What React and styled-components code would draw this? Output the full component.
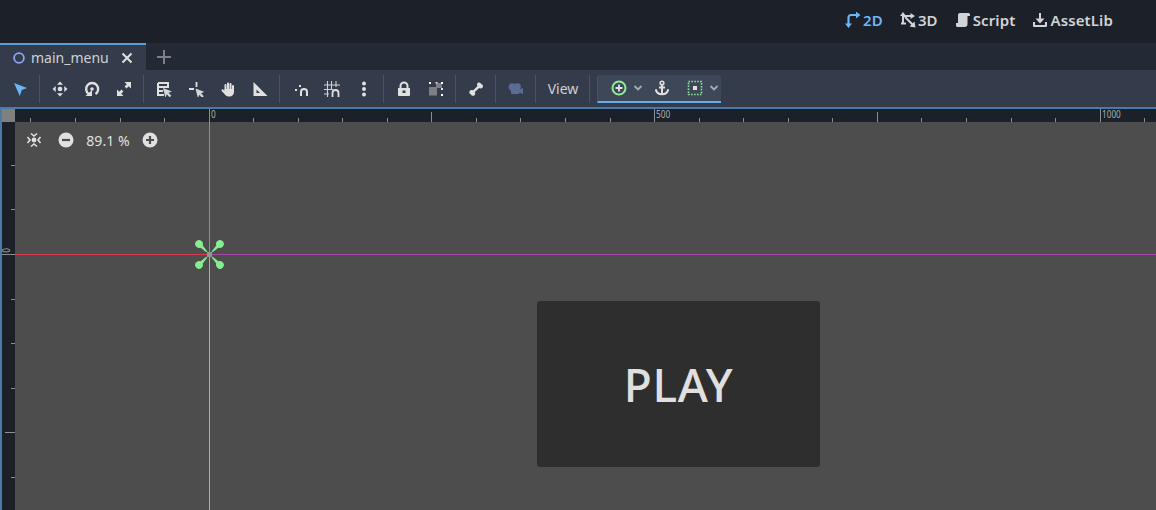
import React from "react";
import styled, { createGlobalStyle } from "styled-components";

const Global = createGlobalStyle`
  html, body { margin: 0; padding: 0; background: #4d4d4d; overflow: hidden; }
  body { font-family: "Noto Sans", "Open Sans", sans-serif; }
`;
const Shell = styled.div`width:1156px;height:510px;display:flex;flex-direction:column;overflow:hidden;`;
const TopBar = styled.header`height:43px;box-sizing:border-box;padding-bottom:3px;background:#1c2129;display:flex;justify-content:flex-end;align-items:center;padding-right:43px;gap:17px;flex:none;`;
const MenuItem = styled.div`display:flex;align-items:center;gap:2px;font-size:15px;font-weight:600;letter-spacing:.12px;color:${p=>p.$on?"#6cb6f5":"#d2d3d6"};line-height:16px;`;
const TabBar = styled.div`height:27px;background:#232935;display:flex;align-items:stretch;flex:none;`;
const Tab = styled.div`width:146px;box-sizing:border-box;border-top:2px solid #5b9fd8;background:#343c4c;display:flex;align-items:center;padding-left:13px;gap:6px;color:#cdd0d5;font-size:14px;`;
const TabName = styled.span`width:84px;`;
const AddTab = styled.div`width:36px;display:flex;align-items:center;justify-content:center;`;
const Toolbar = styled.div`height:37px;background:#343c4c;display:flex;align-items:center;padding-left:4px;flex:none;`;
const ToolBtn = styled.div`width:32px;height:28px;display:flex;align-items:center;justify-content:center;`;
const Sep = styled.div`width:8px;height:28px;flex:none;&::before{content:"";display:block;width:1px;height:100%;margin-left:3px;background:#4a5262;}`;
const ViewBtn = styled.div`width:46px;text-align:center;font-size:14px;color:#cdd0d5;`;
const AnchorPanel = styled.div`margin-left:3px;width:124px;height:28px;box-sizing:border-box;background:#3e4757;border-bottom:2px solid #63ade8;border-left:1px solid #4a5262;border-radius:3px 3px 0 0;display:flex;align-items:center;padding-left:12px;`;
const PanelItem = styled.div`width:${p=>p.$w}px;margin-left:${p=>p.$ml||0}px;display:flex;align-items:center;justify-content:center;flex:none;`;
const Viewport = styled.div`flex:1;position:relative;background:#4d4d4d;border-top:2px solid #4a7ba8;border-left:2px solid #4a7ba8;display:grid;grid-template-columns:13px 1fr;grid-template-rows:13px 1fr;`;
const Corner = styled.div`background:#808080;`;
const RulerTrack = styled.div`position:relative;background:#1c2129;`;
const RulerTicks = styled.svg`display:block;`;
const RulerLabel = styled.span`position:absolute;left:${p=>p.$x}px;top:0;font-size:10px;line-height:11px;color:#a8aaad;transform:scaleX(.82);transform-origin:left top;`;
const RulerLabelV = styled.span`position:absolute;left:2px;top:124px;font-size:10px;line-height:9px;color:#a8aaad;transform:scaleY(.82) rotate(-90deg);`;
const Canvas = styled.div`position:relative;overflow:hidden;background:#4d4d4d;`;
const ZoomBar = styled.div`position:absolute;left:11px;top:9px;display:flex;align-items:center;height:18px;color:#e0e0e0;font-size:14px;`;
const ZoomText = styled.span`width:68px;text-align:center;letter-spacing:.1px;white-space:nowrap;`;
const ZoomReset = styled.div`width:16px;display:flex;margin-right:16px;`;
const GuideVTop = styled.div`position:absolute;left:194px;top:0;height:132px;width:1px;background:#7cae1a;`;
const GuideVBottom = styled.div`position:absolute;left:194px;top:133px;bottom:0;width:1px;background:#a3b0a3;`;
const GuideRed = styled.div`position:absolute;left:0;top:132px;width:194px;height:1px;background:#d83a52;`;
const GuidePurple = styled.div`position:absolute;left:195px;right:0;top:132px;height:1px;background:#a843a8;`;
const Origin = styled.svg`position:absolute;left:178px;top:116px;`;
const PlayButton = styled.div`position:absolute;left:522px;top:179px;width:283px;height:166px;background:#2e2e2e;border-radius:3px;display:flex;align-items:center;justify-content:center;color:#e0e0e0;font-size:46px;font-weight:500;letter-spacing:.6px;line-height:1;`;

const I = ({children,s=16,c="#e0e0e0",f="none",w=1.5}) => (
  <svg width={s} height={s} viewBox="0 0 16 16" fill={f} stroke={c} strokeWidth={w} strokeLinecap="round" strokeLinejoin="round">{children}</svg>
);
const Cursor = ({c="#d4d5d8",x=6,y=6}) => <path d={`M${x} ${y}l9 3.400-3.400 1.400 2.700 3-1.700 1.500-2.800-3-1.300 3.500z`} fill={c} stroke="none"/>;

const tools = {
  select:<I><path d="M2 2l13 5-5.200 2-2 6z" fill="#6cb6f5" stroke="none"/></I>,
  move:<I><g fill="#e0e0e0" stroke="none"><path d="M8 .500l3 3.200H5zM8 15.500l3-3.200H5zM.500 8l3.200-3v6zM15.500 8l-3.200-3v6z"/><circle cx="8" cy="8" r="2.300"/></g></I>,
  rotate:<I w={2.400}><path d="M4.800 13A6 6 0 1 1 11.500 13" strokeLinecap="butt"/><circle cx="8" cy="8" r="1.800" fill="#e0e0e0" stroke="none"/><path d="M1.500 15h6.500V9z" fill="#e0e0e0" stroke="none"/></I>,
  scale:<I><g fill="#e0e0e0" stroke="none"><path d="M8.500 1H15v6.500l-2.300-2.300L10.500 7.400 8.600 5.500 10.800 3.300zM1 15V8.500l2.300 2.300 2.200-2.200 1.900 1.900-2.200 2.200L7.500 15z"/></g></I>,
  list:<I><path d="M2 2h10v4H2M2 2v12h6M2 10h5" strokeWidth={2} strokeLinecap="butt" strokeLinejoin="miter"/><Cursor x={7} y={7}/></I>,
  pivot:<I><path d="M1 8h5M8.500 1v5" strokeWidth={1.800} strokeLinecap="butt"/><Cursor x={7.500} y={7.500}/></I>,
  pan:<I><path d="M5.500 9V4M8 8V2.500M10.500 8V3M13 9V5" strokeWidth={2}/><path d="M4.500 8h9.500v3c0 2.500-2 4.500-4.500 4.500h-1c-2 0-3-1-4-2.500L1.500 9.800C1 9 2.300 7.800 3.200 8.600l1.300 1.200z" fill="#e0e0e0" stroke="none"/></I>,
  ruler:<I><path d="M1.500 1v14H15.500zM4.500 8.500V12h3.500z" fill="#e0e0e0" fillRule="evenodd" stroke="none"/></I>,
  smart:<I><path d="M9 15v-4a3 3 0 0 1 6 0v4" strokeWidth={2} strokeLinecap="butt"/><g fill="#e0e0e0" stroke="none"><rect x="3" y="8" width="2" height="2"/><rect x="7" y="4" width="2" height="2"/></g></I>,
  grid:<I><path d="M0 4h16M0 8.500h9M0 13h5M3.500 0v16M7.500 0v8M12 0v6" strokeWidth={1.100} strokeLinecap="butt" stroke="#d0d1d4"/><path d="M8.500 16v-4a3 3 0 0 1 6 0v4" strokeWidth={1.800} strokeLinecap="butt"/></I>,
  dots:<I><g fill="#e0e0e0" stroke="none"><circle cx="8" cy="2.500" r="2"/><circle cx="8" cy="8" r="2"/><circle cx="8" cy="13.500" r="2"/></g></I>,
  lock:<I><path d="M2 7h12v7a1 1 0 0 1-1 1H3a1 1 0 0 1-1-1z" fill="#e0e0e0" stroke="none"/><path d="M4.500 7V5a3.500 3.500 0 0 1 7 0v2" strokeWidth={2}/><rect x="6.500" y="9.500" width="3" height="2.500" fill="#343c4c" stroke="none"/></I>,
  group:<I><g stroke="none"><path d="M1 6h7V2h6v5H9v7.500H1z" fill="#7c7f86"/><rect x="1" y="1" width="2" height="2" fill="#fff"/><rect x="7.500" y="1" width="2" height="1.500" fill="#e0e0e0"/><rect x="13" y="1" width="2" height="2" fill="#fff"/><rect x="13" y="7" width="2" height="2" fill="#e0e0e0"/><rect x="13" y="13" width="2" height="2" fill="#fff"/></g></I>,
  bone:<I><path d="M11 1.500a2.300 2.300 0 0 1 2.200 1.500 2.300 2.300 0 0 1 1.200 3.800c-.9 1-2.400.8-3.200.2L6.800 11c.6 1 .6 2.400-.3 3.200-1.200 1.200-3.200.6-3.600-1-1.600-.4-2.200-2.300-1-3.500.9-.9 2.300-.9 3.200-.3L9.500 5c-.6-1-.7-2.200.1-3 .4-.4 .9-.5 1.400-.5z" fill="#e0e0e0" stroke="none"/></I>,
  camera:<I><g fill="#5d6c94" stroke="none"><circle cx="4.500" cy="6" r="3.800"/><circle cx="9.500" cy="5.500" r="3.300"/><rect x="3" y="7" width="8.500" height="6" rx="1"/><path d="M11 8.500l4-1.500v6l-4-1.500z"/></g></I>,
};

const AddIcon = () => <I><circle cx="8" cy="8" r="6.500" stroke="#8eef97" strokeWidth={2}/><path d="M8 4.500v7M4.500 8h7" stroke="#e0e0e0" strokeWidth={1.800} strokeLinecap="butt"/></I>;
const Chevron = () => <svg width="10" height="6" viewBox="0 0 10 6"><path d="M1.500 1l3.500 3.500L8.500 1" fill="none" stroke="#a6aab2" strokeWidth="1.800"/></svg>;
const AnchorIcon = () => <I><circle cx="8" cy="3" r="1.800" strokeWidth={1.600}/><path d="M8 4.500V14M5 7.500h6" strokeWidth={2} strokeLinecap="butt"/><path d="M2 10c.500 2.800 3 4.300 6 4.300s5.500-1.500 6-4.300" strokeWidth={2}/></I>;
const RectIcon = () => <I><rect x="1.500" y="1.500" width="13" height="13" stroke="#8eef97" strokeDasharray="1.500 1.400" strokeLinecap="butt" strokeWidth={1.600}/><rect x="6" y="6" width="4" height="4" fill="#e0e0e0" stroke="none"/></I>;

const hTicks = [];
for (let i = -4; i <= 21; i++) {
  hTicks.push({ x: Math.round(193.6 + i * 44.55), len: i % 10 === 0 ? 13 : i % 5 === 0 ? 10 : 4 });
}
const LABELS = [[0,"0"],[10,"500"],[20,"1000"]];
const vTicks = [];
for (let i = -2; i <= 5; i++) {
  vTicks.push({ y: Math.round(132 + i * 44.55), len: i === 0 ? 13 : i === 4 ? 10 : 4 });
}
const Petal = ({r}) => (
  <g transform={`rotate(${r} 16.500 16.500)`} fill="#86ee90">
    <path d="M14.700 3.500L15.900 12.800H17.100L18.300 3.500z" />
    <circle cx="16.500" cy="1.700" r="3.800" />
  </g>
);

export default function App() {
  return (
    <Shell>
      <Global />
      <TopBar>
        <MenuItem $on>
          <I c="#6cb6f5" w={2.200}><path d="M3.500 13V5.500a2.500 2.500 0 0 1 2.500-2.500H12" strokeLinecap="butt"/><path d="M11 -.500l4.500 3.500L11 6.500zM0 11.500L3.500 16l3.500-4.500z" fill="#6cb6f5" stroke="none"/></I>
          2D
        </MenuItem>
        <MenuItem>
          <I c="#d2d3d6" w={2}><path d="M3 12V2M1 11.500h5M3 4h9M5 5l8 8" strokeLinecap="butt"/><path d="M15.500 15.500l-6-1 5-5zM0 4L3 0l3 4zM10.500 1l4.500 3-4.500 3z" fill="#d2d3d6" stroke="none"/></I>
          3D
        </MenuItem>
        <MenuItem>
          <I c="#d2d3d6"><path d="M5 1h8.500a1.500 1.500 0 0 1 1.500 1.500V4h-2.500v8a3 3 0 0 1-3 3H2.500A1.500 1.500 0 0 1 1 13.500V11h2V3a2 2 0 0 1 2-2z" fill="#d2d3d6" stroke="none"/></I>
          Script
        </MenuItem>
        <MenuItem>
          <I c="#d2d3d6" w={2}><path d="M8 1v8" strokeLinecap="butt"/><path d="M3.500 6.500L8 11.500l4.500-5z" fill="#d2d3d6" stroke="none"/><path d="M2 10v4h12v-4" strokeLinecap="butt"/></I>
          AssetLib
        </MenuItem>
      </TopBar>
      <TabBar>
        <Tab>
          <svg width="12" height="12" viewBox="0 0 12 12"><circle cx="6" cy="6" r="4.900" fill="none" stroke="#8da5f3" strokeWidth="1.800"/></svg>
          <TabName>main_menu</TabName>
          <svg width="12" height="12" viewBox="0 0 12 12"><path d="M1.500 1.500l9 9M10.500 1.500l-9 9" stroke="#e0e0e0" strokeWidth="2"/></svg>
        </Tab>
        <AddTab><svg width="14" height="14" viewBox="0 0 14 14"><path d="M7 0v14M0 7h14" stroke="#7c7f86" strokeWidth="2"/></svg></AddTab>
      </TabBar>
      <Toolbar>
        <ToolBtn>{tools.select}</ToolBtn><Sep />
        <ToolBtn>{tools.move}</ToolBtn><ToolBtn>{tools.rotate}</ToolBtn><ToolBtn>{tools.scale}</ToolBtn><Sep />
        <ToolBtn>{tools.list}</ToolBtn><ToolBtn>{tools.pivot}</ToolBtn><ToolBtn>{tools.pan}</ToolBtn><ToolBtn>{tools.ruler}</ToolBtn><Sep />
        <ToolBtn>{tools.smart}</ToolBtn><ToolBtn>{tools.grid}</ToolBtn><ToolBtn>{tools.dots}</ToolBtn><Sep />
        <ToolBtn>{tools.lock}</ToolBtn><ToolBtn>{tools.group}</ToolBtn><Sep />
        <ToolBtn>{tools.bone}</ToolBtn><Sep />
        <ToolBtn>{tools.camera}</ToolBtn><Sep />
        <ViewBtn>View</ViewBtn><Sep />
        <AnchorPanel>
          <PanelItem $w={18}><AddIcon /></PanelItem>
          <PanelItem $w={20}><Chevron /></PanelItem>
          <PanelItem $w={28}><AnchorIcon /></PanelItem>
          <PanelItem $w={16} $ml={11}><RectIcon /></PanelItem>
          <PanelItem $w={14} $ml={4}><Chevron /></PanelItem>
        </AnchorPanel>
      </Toolbar>
      <Viewport>
        <Corner />
        <RulerTrack>
          <RulerTicks width="1141" height="13" viewBox="0 0 1141 13">
            {hTicks.map(t => <rect key={t.x} x={t.x} y={13 - t.len} width="1" height={t.len} fill="#8b8e93" />)}
          </RulerTicks>
          {LABELS.map(([i, l]) => <RulerLabel key={l} $x={Math.round(193.6 + i * 44.55) + 2}>{l}</RulerLabel>)}
        </RulerTrack>
        <RulerTrack>
          <RulerTicks width="13" height="388" viewBox="0 0 13 388">
            {vTicks.map(t => <rect key={t.y} x={13 - t.len} y={t.y} width={t.len} height="1" fill="#8b8e93" />)}
          </RulerTicks>
          <RulerLabelV>0</RulerLabelV>
        </RulerTrack>
        <Canvas>
          <GuideRed /><GuidePurple /><GuideVTop /><GuideVBottom />
          <Origin width="33" height="33" viewBox="0 0 33 33">
            <Petal r={45} /><Petal r={135} /><Petal r={225} /><Petal r={315} />
            <rect x="14" y="14" width="5" height="5" fill="#8b9c8b" />
          </Origin>
          <ZoomBar>
            <ZoomReset><I w={1.600}><circle cx="8" cy="8" r="2.400" fill="#e0e0e0" stroke="none"/><path d="M5 1.500L8 4l3-2.500M5 14.500L8 12l3 2.500M1.500 5L4 8l-2.500 3M14.500 5L12 8l2.500 3" strokeLinecap="butt" strokeLinejoin="miter"/></I></ZoomReset>
            <I><circle cx="8" cy="8" r="7.500" fill="#e0e0e0" stroke="none"/><path d="M4 8h8" stroke="#4d4d4d" strokeWidth="2.200" strokeLinecap="butt"/></I>
            <ZoomText>89.1 %</ZoomText>
            <I><circle cx="8" cy="8" r="7.500" fill="#e0e0e0" stroke="none"/><path d="M4 8h8M8 4v8" stroke="#4d4d4d" strokeWidth="2.200" strokeLinecap="butt"/></I>
          </ZoomBar>
          <PlayButton>PLAY</PlayButton>
        </Canvas>
      </Viewport>
    </Shell>
  );
}
